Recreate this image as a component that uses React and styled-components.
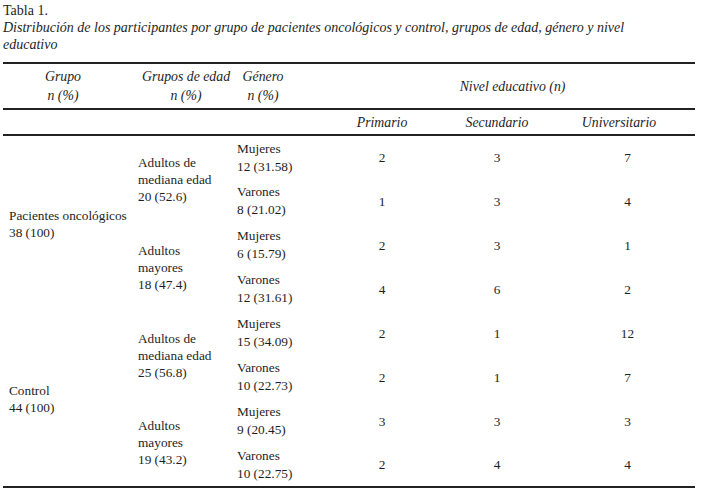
import React from 'react';
import styled, { createGlobalStyle } from 'styled-components';

const SERIF = '"Liberation Serif", "Times New Roman", serif';

const GlobalStyle = createGlobalStyle`
  body {
    margin: 0;
    background: #ffffff;
    color: #1e1e1e;
    font-family: ${SERIF};
  }
`;

const groups = [
  {
    name: 'Pacientes oncológicos',
    n: '38 (100)',
    ages: [
      {
        label: ['Adultos de', 'mediana edad', '20 (52.6)'],
        genders: [
          { name: 'Mujeres', n: '12 (31.58)', values: [2, 3, 7] },
          { name: 'Varones', n: '8 (21.02)', values: [1, 3, 4] },
        ],
      },
      {
        label: ['Adultos', 'mayores', '18 (47.4)'],
        genders: [
          { name: 'Mujeres', n: '6 (15.79)', values: [2, 3, 1] },
          { name: 'Varones', n: '12 (31.61)', values: [4, 6, 2] },
        ],
      },
    ],
  },
  {
    name: 'Control',
    n: '44 (100)',
    ages: [
      {
        label: ['Adultos de', 'mediana edad', '25 (56.8)'],
        genders: [
          { name: 'Mujeres', n: '15 (34.09)', values: [2, 1, 12] },
          { name: 'Varones', n: '10 (22.73)', values: [2, 1, 7] },
        ],
      },
      {
        label: ['Adultos', 'mayores', '19 (43.2)'],
        genders: [
          { name: 'Mujeres', n: '9 (20.45)', values: [3, 3, 3] },
          { name: 'Varones', n: '10 (22.75)', values: [2, 4, 4] },
        ],
      },
    ],
  },
];

function App() {
  return (
    <Page>
      <GlobalStyle />
      <Title>Tabla 1.</Title>
      <Caption>
        Distribución de los participantes por grupo de pacientes oncológicos y control, grupos de edad, género y nivel
        <br />
        educativo
      </Caption>
      <Table>
        <colgroup>
          <col style={{ width: 129 }} />
          <col style={{ width: 99 }} />
          <col style={{ width: 99 }} />
          <col style={{ width: 104 }} />
          <col style={{ width: 126 }} />
          <col style={{ width: 135 }} />
        </colgroup>
        <thead>
          <HeadRow>
            <HeadCell padRight={9}>Grupo<br />n (%)</HeadCell>
            <HeadCell padLeft={9}>Grupos de edad<br />n (%)</HeadCell>
            <HeadCell padRight={35}>Género<br />n (%)</HeadCell>
            <HeadCell colSpan={3}>Nivel educativo (n)</HeadCell>
          </HeadRow>
          <SubHeadRow>
            <HeadCell />
            <HeadCell />
            <HeadCell />
            <HeadCell>Primario</HeadCell>
            <HeadCell>Secundario</HeadCell>
            <HeadCell padRight={17}>Universitario</HeadCell>
          </SubHeadRow>
        </thead>
        <tbody>
          {groups.map(group => group.ages.map((age, ai) => age.genders.map((gender, gi) => (
            <BodyRow key={`${group.name}-${ai}-${gi}`}>
              {ai === 0 && gi === 0 && (
                <GroupCell rowSpan={4}>{group.name}<br />{group.n}</GroupCell>
              )}
              {gi === 0 && (
                <AgeCell rowSpan={2}>
                  {age.label.map(line => <div key={line}>{line}</div>)}
                </AgeCell>
              )}
              <GenderCell>{gender.name}<br />{gender.n}</GenderCell>
              {gender.values.map((value, vi) => (
                <NumCell key={vi}>{value}</NumCell>
              ))}
            </BodyRow>
          ))))}
        </tbody>
      </Table>
    </Page>
  );
}

export default App;

// styles
const Page = styled.div`
  width: 703px;
  padding: 2px 0 0 3px;
  box-sizing: border-box;
  font-family: ${SERIF};
`;

const Title = styled.div`
  font-family: ${SERIF};
  font-size: 14px;
  line-height: 17px;
`;

const Caption = styled.div`
  font-family: ${SERIF};
  font-size: 14px;
  line-height: 17px;
  font-style: italic;
  margin-bottom: 9px;
`;

const Table = styled.table`
  width: 692px;
  border-collapse: collapse;
  table-layout: fixed;
  font-family: ${SERIF};
  border-top: 2px solid #222;
  border-bottom: 2px solid #222;
`;

const HeadRow = styled.tr`
  height: 46px;
  border-bottom: 2px solid #222;
`;

const SubHeadRow = styled.tr`
  height: 26px;
  border-bottom: 2px solid #222;
`;

const HeadCell = styled.th`
  font-family: ${SERIF};
  font-weight: normal;
  font-style: italic;
  font-size: 13.8px;
  line-height: 19px;
  text-align: center;
  padding: 0 ${props => props.padRight || 0}px 0 ${props => props.padLeft || 0}px;
  vertical-align: middle;
  white-space: nowrap;
`;

const BodyRow = styled.tr`
  height: 44px;
`;

const BodyCell = styled.td`
  font-family: ${SERIF};
  font-size: 13.3px;
  line-height: 17px;
  vertical-align: middle;
  padding: 0;
  color: #1e1e1e;
`;

const GroupCell = styled(BodyCell)`
  padding-left: 6px;
`;

const AgeCell = styled(BodyCell)`
  padding-left: 6px;
`;

const GenderCell = styled(BodyCell)`
  padding-left: 6px;
  line-height: 18px;
`;

const NumCell = styled(BodyCell)`
  text-align: center;
`;
